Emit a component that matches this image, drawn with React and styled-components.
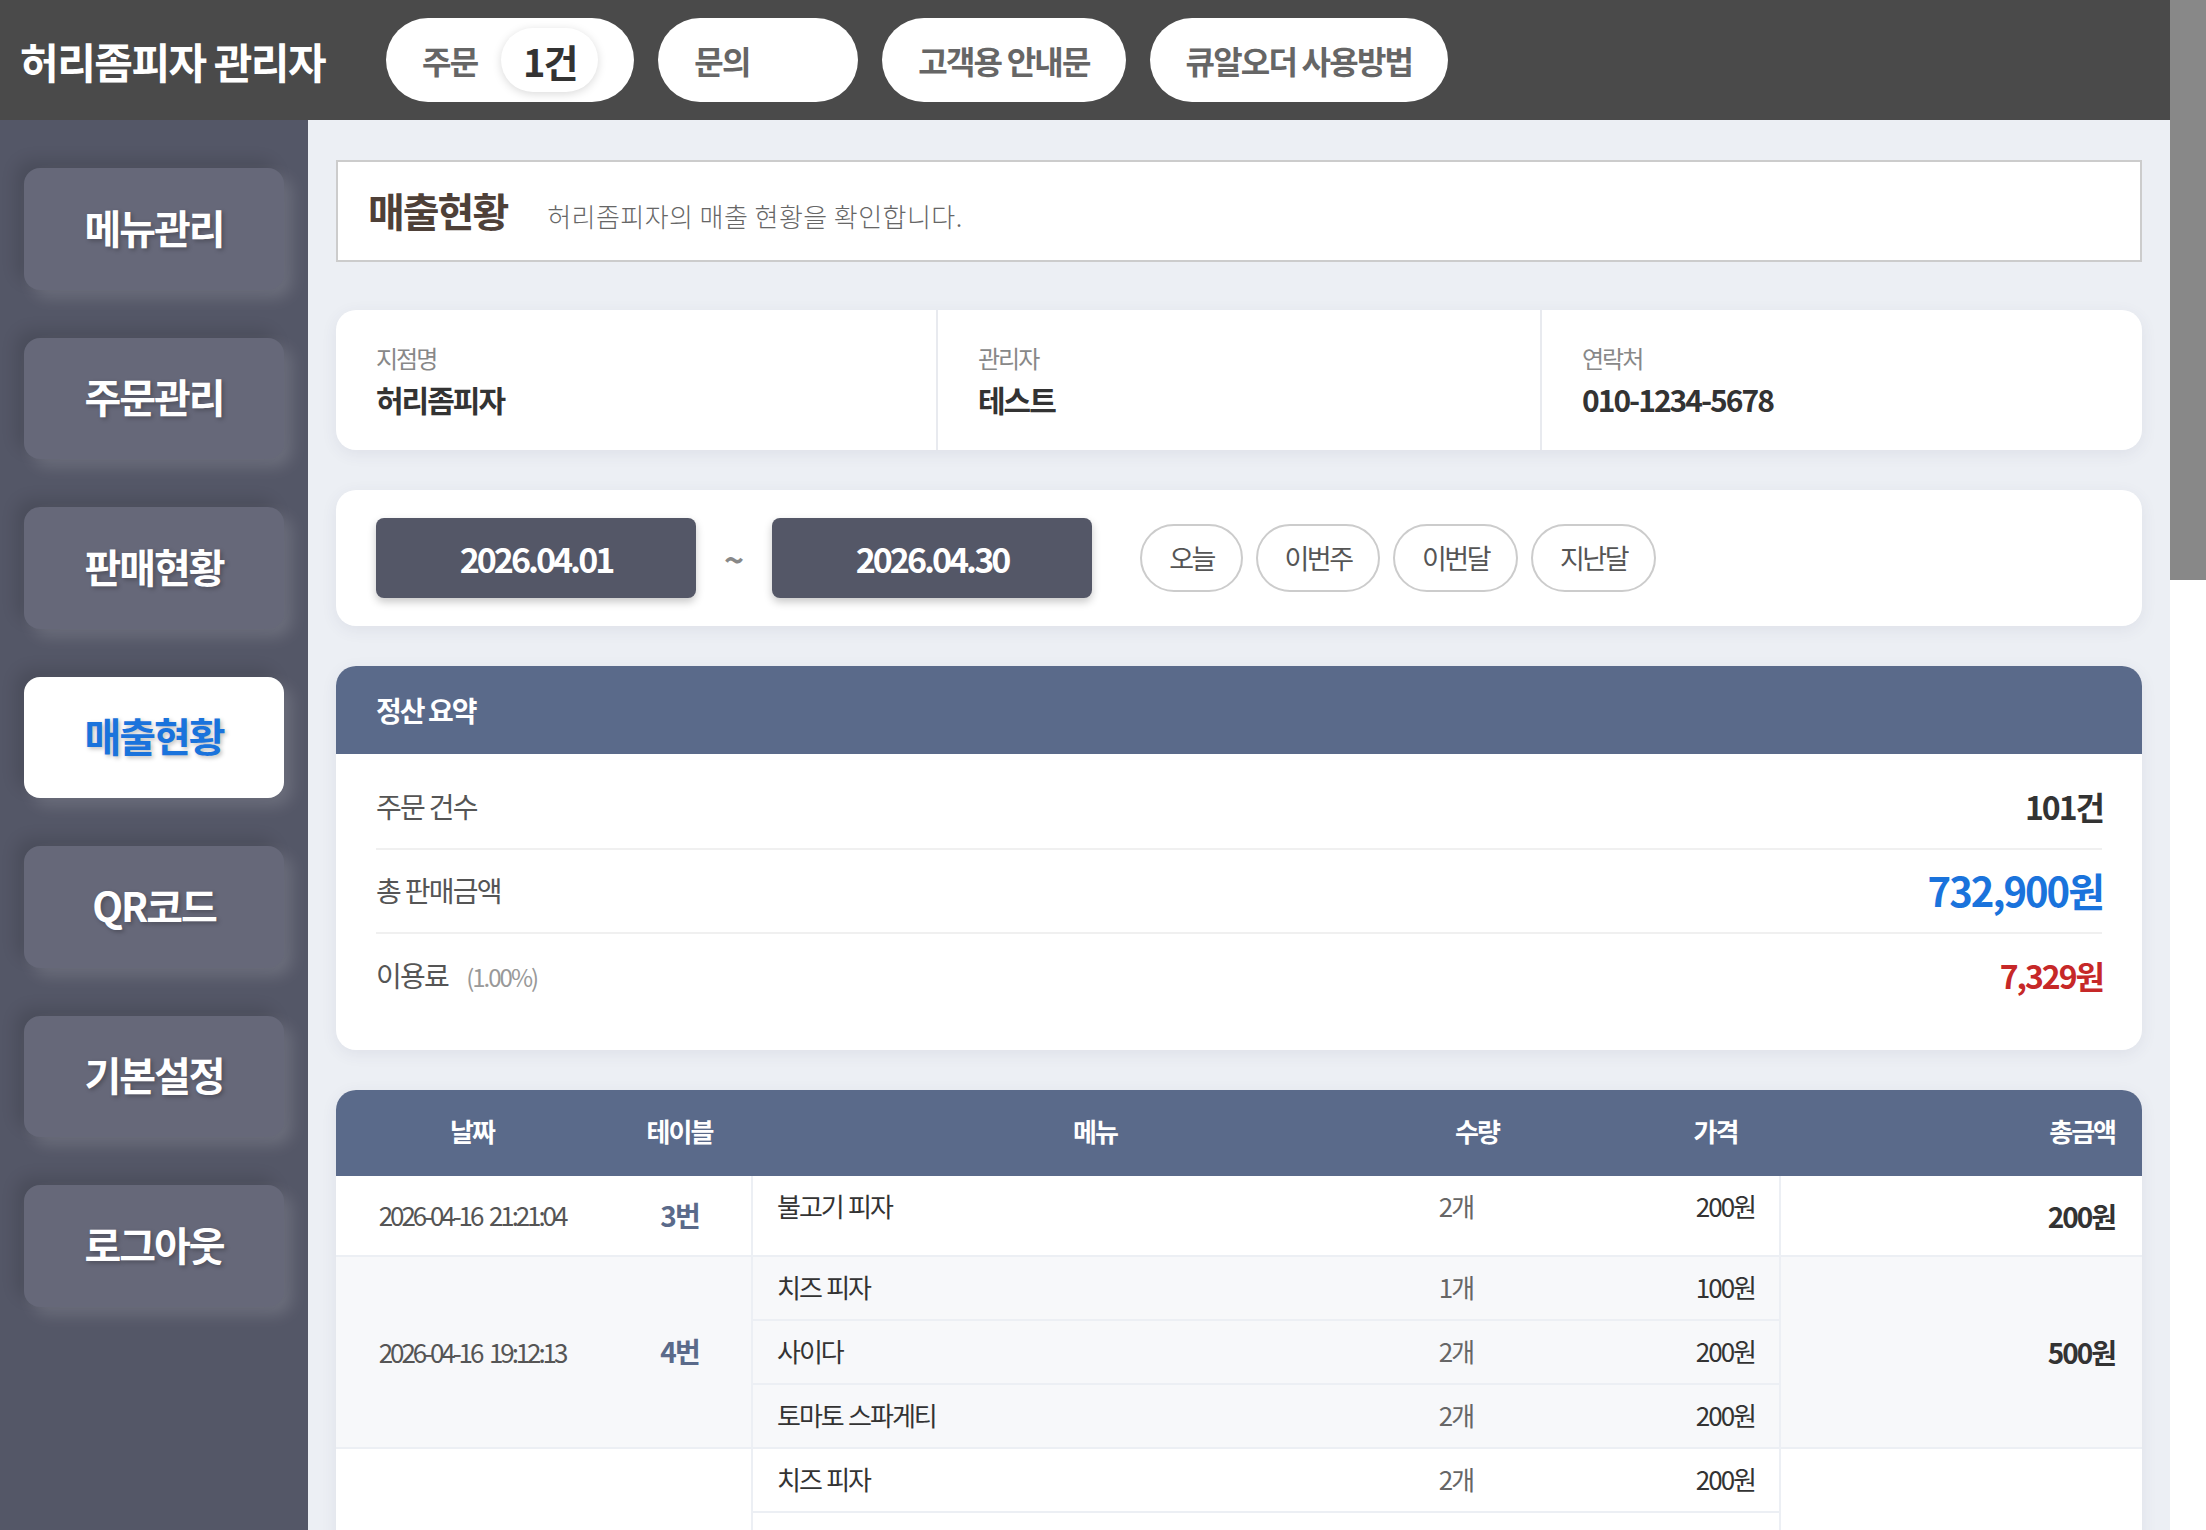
import React from "react";
import styled, { createGlobalStyle } from "styled-components";

const Global = createGlobalStyle`
  html, body { margin: 0; padding: 0; background: #fff; }
  * { box-sizing: border-box; }
  body {
    font-family: "Noto Sans CJK KR", "Noto Sans", sans-serif;
    letter-spacing: -2px;
    color: #333;
  }
`;

const Viewport = styled.div`
  height: 1530px;
  overflow: hidden;
  display: flex;
  background: #fff;
`;

const Page = styled.div`
  flex: 1;
  min-width: 0;
`;

const ScrollRail = styled.div`
  width: 36px;
  flex: none;
  background: #fff;
`;

const ScrollThumb = styled.div`
  height: 580px;
  background: #888;
`;

const Header = styled.header`
  height: 120px;
  background: #4a4a4a;
  display: flex;
  align-items: center;
  padding-left: 20px;
`;

const Logo = styled.h1`
  margin: 0 60px 0 0;
  font-size: 42px;
  font-weight: 700;
  letter-spacing: -1.5px;
  color: #fff;
  white-space: nowrap;
  width: 306px;
`;

const TopNav = styled.nav`
  display: flex;
  gap: 24px;
`;

const Pill = styled.a`
  height: 84px;
  min-width: ${(p) => p.$minWidth || 0}px;
  padding: 0 36px;
  border-radius: 42px;
  background: #fff;
  display: flex;
  align-items: center;
  gap: 24px;
  font-size: 32px;
  font-weight: 700;
  letter-spacing: -1.8px;
  color: #666;
  white-space: nowrap;
`;

const Count = styled.span`
  width: 97px;
  height: 64px;
  border-radius: 32px;
  background: #fff;
  box-shadow: 0 2px 10px rgba(0, 0, 0, 0.15);
  display: flex;
  align-items: center;
  justify-content: center;
  font-size: 38px;
  font-weight: 700;
  letter-spacing: -2px;
  color: #333;
`;

const Layout = styled.div`
  display: flex;
`;

const Sidebar = styled.aside`
  width: 308px;
  flex: none;
  background: #545767;
  padding: 48px 24px;
  display: flex;
  flex-direction: column;
  gap: 48px;
`;

const SideItem = styled.a`
  height: 121.5px;
  padding-bottom: 4px;
  border-radius: 16px;
  display: flex;
  align-items: center;
  justify-content: center;
  font-size: 40px;
  font-weight: 700;
  background: ${(p) => (p.$active ? "#fff" : "#666879")};
  color: ${(p) => (p.$active ? "#1a73dc" : "#fff")};
  text-shadow: 2px 2px 4px rgba(0, 0, 0, 0.25);
  box-shadow: 8px 8px 16px rgba(255, 255, 255, 0.14), -8px -8px 16px rgba(0, 0, 0, 0.12);
`;

const Main = styled.main`
  flex: 1;
  min-width: 0;
  background: #eceff4;
  padding: 40px 28px;
  display: flex;
  flex-direction: column;
  gap: 40px;
`;

const TitleBox = styled.section`
  height: 102px;
  margin-bottom: 8px;
  background: #fff;
  border: 2px solid #ccc;
  padding: 0 0 3px 30px;
  display: flex;
  align-items: center;
  gap: 40px;
`;

const PageTitle = styled.h2`
  margin: 0;
  font-size: 40px;
  font-weight: 700;
  color: #4e4038;
`;

const PageDesc = styled.p`
  margin: 11px 0 0;
  font-size: 26px;
  font-weight: 300;
  letter-spacing: 0.45px;
  color: #666;
`;

const Card = styled.section`
  background: #fff;
  border-radius: 20px;
  box-shadow: 0 4px 16px rgba(60, 70, 100, 0.08);
  overflow: hidden;
`;

const InfoGrid = styled(Card)`
  height: 140px;
  display: grid;
  grid-template-columns: 600px 604px 1fr;
`;

const InfoCell = styled.div`
  padding: 30px 40px 0;
  border-left: ${(p) => (p.$first ? "none" : "2px solid #e8eaef")};
`;

const InfoLabel = styled.div`
  font-size: 24px;
  line-height: 36px;
  color: #888;
`;

const InfoValue = styled.div`
  margin-top: 1px;
  font-size: 30px;
  line-height: 44px;
  font-weight: 700;
  color: #333;
`;

const FilterBar = styled(Card)`
  height: 136px;
  padding: 0 40px;
  display: flex;
  align-items: center;
`;

const DateButton = styled.button`
  width: 320px;
  height: 80px;
  border: 0;
  border-radius: 8px;
  background: #545767;
  color: #fff;
  font: 700 34px "Noto Sans CJK KR", sans-serif;
  letter-spacing: -3px;
  box-shadow: 0 4px 8px rgba(0, 0, 0, 0.22);
`;

const Tilde = styled.span`
  width: 76px;
  text-align: center;
  font-size: 34px;
  font-weight: 700;
  color: #888;
  letter-spacing: 0;
`;

const QuickGroup = styled.div`
  margin-left: 48px;
  display: flex;
  gap: 13px;
`;

const QuickButton = styled.button`
  width: ${(p) => p.$w}px;
  height: 68px;
  padding: 0 0 2px;
  border: 2px solid #ccc;
  border-radius: 34px;
  background: #fff;
  color: #555;
  font: 400 27px "Noto Sans CJK KR", sans-serif;
  letter-spacing: -2.5px;
`;

const CardHead = styled.div`
  height: 88px;
  padding: 0 40px;
  background: #5a6a8a;
  display: flex;
  align-items: center;
  color: #fff;
  font-size: 28px;
  font-weight: 700;
`;

const SummaryBody = styled.div`
  padding: 12px 40px 32px;
`;

const SummaryRow = styled.div`
  height: 84px;
  padding-bottom: 2px;
  display: flex;
  align-items: center;
  justify-content: space-between;
  border-bottom: ${(p) => (p.$last ? "none" : "2px solid #f0f0f0")};
`;

const SummaryLabel = styled.span`
  font-size: 28px;
  letter-spacing: -1.7px;
  color: #555;
`;

const SummaryNote = styled.small`
  margin-left: 18px;
  font-size: 24px;
  letter-spacing: -2px;
  color: #999;
`;

const SummaryValue = styled.strong`
  font-size: ${(p) => p.$size}px;
  font-weight: 700;
  color: ${(p) => p.$color};
  margin-right: -1px;
`;

const TableCard = styled(Card)``;

const TableHead = styled.div`
  height: 86px;
  padding-bottom: 5px;
  display: grid;
  grid-template-columns: 272px 143px 688px 76px 401px 1fr;
  align-items: center;
  background: #5a6a8a;
  color: #fff;
  font-size: 26px;
  font-weight: 700;
  text-align: center;
  white-space: nowrap;
`;

const TotalHead = styled.div`
  text-align: right;
  padding-right: 27px;
`;

const OrderRow = styled.div`
  display: grid;
  grid-template-columns: 272px 143px 1030px 1fr;
  align-items: stretch;
  background: ${(p) => (p.$alt ? "#f7f8fa" : "#fff")};
  border-bottom: 2px solid #eceff4;
`;

const DateCell = styled.div`
  padding-bottom: 2px;
  display: flex;
  align-items: center;
  justify-content: center;
  font-size: 26px;
  letter-spacing: -3.1px;
  word-spacing: 5px;
  color: #555;
  white-space: nowrap;
`;

const TableCell = styled.div`
  padding-bottom: 2px;
  display: flex;
  align-items: center;
  justify-content: center;
  font-size: 28px;
  font-weight: 700;
  color: #5a6a8a;
`;

const Items = styled.div`
  border-left: 2px solid #eceff4;
  border-right: 2px solid #eceff4;
  min-height: 79px;
`;

const Item = styled.div`
  height: ${(p) => (p.$last ? 62 : 64)}px;
  padding: 0 0 3px 24px;
  display: grid;
  grid-template-columns: 1fr 200px 223px;
  align-items: center;
  border-bottom: ${(p) => (p.$last ? "none" : "2px solid #eceff4")};
  font-size: 26px;
  word-spacing: 1.5px;
  color: #333;
`;

const ItemQty = styled.span`
  text-align: center;
  color: #666;
`;

const ItemPrice = styled.span`
  text-align: right;
  padding-right: 24px;
`;

const TotalCell = styled.div`
  display: flex;
  align-items: center;
  justify-content: flex-end;
  padding-right: 27px;
  font-size: 28px;
  font-weight: 700;
  color: #333;
`;

const menus = ["메뉴관리", "주문관리", "판매현황", "매출현황", "QR코드", "기본설정", "로그아웃"];
const quick = [["오늘", 103], ["이번주", 124], ["이번달", 125], ["지난달", 125]];
const orders = [
  { date: "2026-04-16 21:21:04", table: "3번", total: "200원", items: [["불고기 피자", "2개", "200원"]] },
  { date: "2026-04-16 19:12:13", table: "4번", total: "500원", items: [["치즈 피자", "1개", "100원"], ["사이다", "2개", "200원"], ["토마토 스파게티", "2개", "200원"]] },
  { date: "2026-04-16 18:40:22", table: "2번", total: "1,200원", items: [["치즈 피자", "2개", "200원"], ["불고기 피자", "2개", "200원"], ["사이다", "2개", "200원"], ["토마토 스파게티", "2개", "200원"], ["콜라", "2개", "200원"], ["감자튀김", "2개", "200원"]] },
];

export default function App() {
  return (
    <Viewport>
      <Global />
      <Page>
        <Header>
          <Logo>허리좀피자 관리자</Logo>
          <TopNav>
            <Pill>주문<Count>1건</Count></Pill>
            <Pill $minWidth={200}>문의</Pill>
            <Pill>고객용 안내문</Pill>
            <Pill>큐알오더 사용방법</Pill>
          </TopNav>
        </Header>
        <Layout>
          <Sidebar>
            {menus.map((m) => (
              <SideItem key={m} $active={m === "매출현황"}>{m}</SideItem>
            ))}
          </Sidebar>
          <Main>
            <TitleBox>
              <PageTitle>매출현황</PageTitle>
              <PageDesc>허리좀피자의 매출 현황을 확인합니다.</PageDesc>
            </TitleBox>
            <InfoGrid>
              <InfoCell $first><InfoLabel>지점명</InfoLabel><InfoValue>허리좀피자</InfoValue></InfoCell>
              <InfoCell><InfoLabel>관리자</InfoLabel><InfoValue>테스트</InfoValue></InfoCell>
              <InfoCell><InfoLabel>연락처</InfoLabel><InfoValue>010-1234-5678</InfoValue></InfoCell>
            </InfoGrid>
            <FilterBar>
              <DateButton>2026.04.01</DateButton>
              <Tilde>~</Tilde>
              <DateButton>2026.04.30</DateButton>
              <QuickGroup>
                {quick.map(([t, w]) => <QuickButton key={t} $w={w}>{t}</QuickButton>)}
              </QuickGroup>
            </FilterBar>
            <Card>
              <CardHead>정산 요약</CardHead>
              <SummaryBody>
                <SummaryRow><SummaryLabel>주문 건수</SummaryLabel><SummaryValue $size={32} $color="#333">101건</SummaryValue></SummaryRow>
                <SummaryRow><SummaryLabel>총 판매금액</SummaryLabel><SummaryValue $size={40} $color="#1a73dc">732,900원</SummaryValue></SummaryRow>
                <SummaryRow $last><SummaryLabel>이용료<SummaryNote>(1.00%)</SummaryNote></SummaryLabel><SummaryValue $size={32} $color="#c62828">7,329원</SummaryValue></SummaryRow>
              </SummaryBody>
            </Card>
            <TableCard>
              <TableHead>
                <div>날짜</div><div>테이블</div><div>메뉴</div><div>수량</div><div>가격</div>
                <TotalHead>총금액</TotalHead>
              </TableHead>
              {orders.map((o, i) => (
                <OrderRow key={o.date} $alt={i % 2 === 1}>
                  <DateCell>{o.date}</DateCell>
                  <TableCell>{o.table}</TableCell>
                  <Items>
                    {o.items.map(([n, q, p], j) => (
                      <Item key={n} $last={j === o.items.length - 1}>
                        <span>{n}</span><ItemQty>{q}</ItemQty><ItemPrice>{p}</ItemPrice>
                      </Item>
                    ))}
                  </Items>
                  <TotalCell>{o.total}</TotalCell>
                </OrderRow>
              ))}
            </TableCard>
          </Main>
        </Layout>
      </Page>
      <ScrollRail><ScrollThumb /></ScrollRail>
    </Viewport>
  );
}
